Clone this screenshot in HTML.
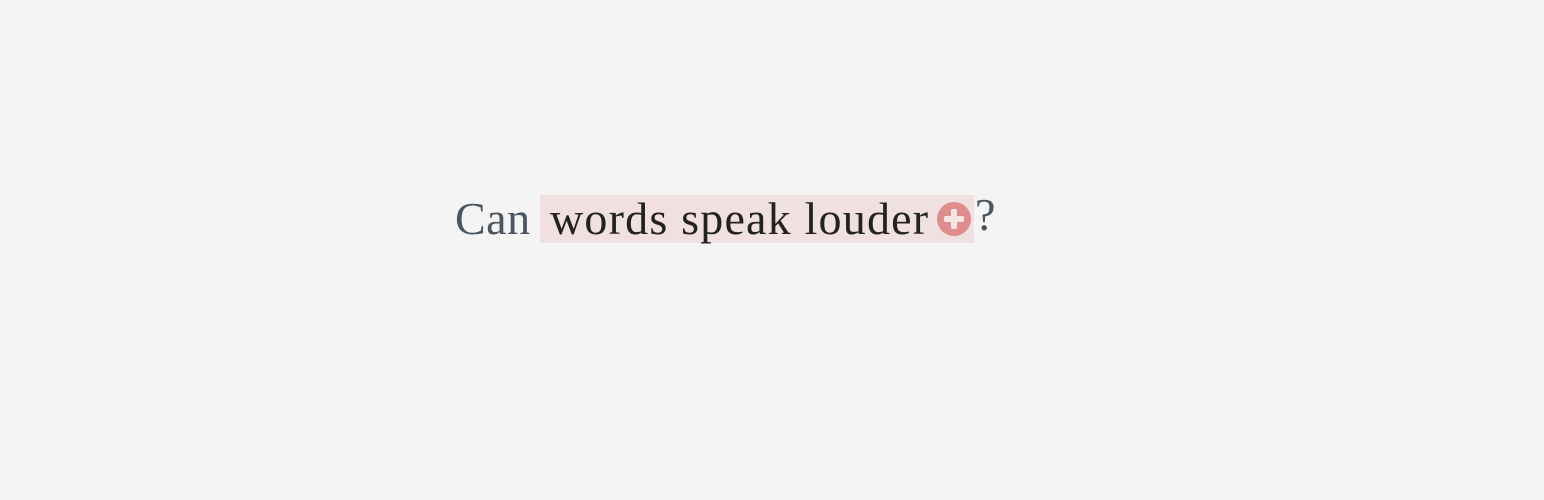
<!DOCTYPE html>
<html><head><style>
html,body{margin:0;width:1544px;height:500px;background:#f4f4f4;overflow:hidden}
.t{position:absolute;font-family:"Liberation Serif",serif;font-size:46px;line-height:1;white-space:nowrap}
</style></head><body>
<div class="t" style="left:455px;top:196px;color:#4a5560;letter-spacing:0.5px">Can</div>
<div style="position:absolute;left:540px;top:195px;width:434px;height:48px;background:#f0e0e0"></div>
<div class="t" style="left:550px;top:196px;color:#222;letter-spacing:1.2px">words speak louder</div>
<svg style="position:absolute;left:936px;top:201px" width="36" height="36" viewBox="0 0 36 36">
<circle cx="18" cy="18" r="17" fill="#de8c8c"/>
<rect x="15" y="8" width="6" height="20" rx="1.5" fill="#f4e6e6"/>
<rect x="8" y="15" width="20" height="6" rx="1.5" fill="#f4e6e6"/>
</svg>
<div class="t" style="left:975px;top:192px;color:#4a5560">?</div>
</body></html>
